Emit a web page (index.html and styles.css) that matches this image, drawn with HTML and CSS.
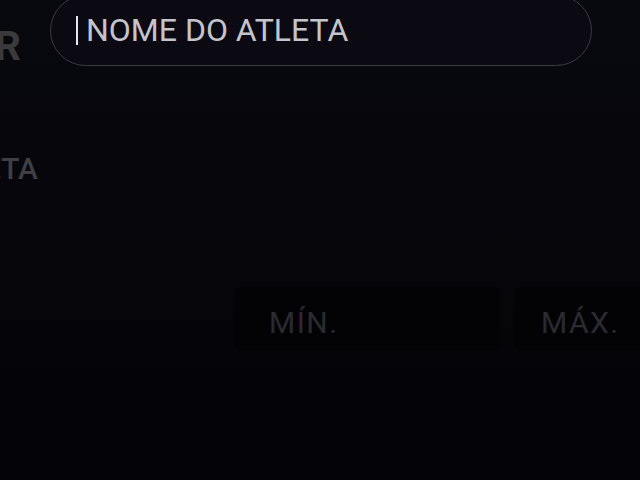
FILE: index.html
```html
<!DOCTYPE html>
<html lang="pt">
<head>
  <meta charset="UTF-8" />
  <meta name="viewport" content="width=device-width, initial-scale=1.0" />
  <title>Buscar atleta</title>
  <link rel="stylesheet" href="styles.css">
</head>
<body>
  <div class="screen">
    <div class="search-row">
      <div class="side-title"><span>FILTRAR</span></div>
      <div class="search-box">
        <span class="caret"></span>
        <span class="search-text">NOME DO ATLETA</span>
      </div>
    </div>

    <div class="field-label"><span>ATLETA</span></div>

    <div class="range-row">
      <div class="range-box">MÍN.</div>
      <div class="range-box">MÁX.</div>
    </div>
  </div>
</body>
</html>
```

FILE: styles.css
```css
html, body {
  margin: 0;
  padding: 0;
  height: 100%;
}
body {
  background: linear-gradient(180deg, #08080f 0%, #05050a 55%, #040307 100%);
  font-family: Roboto, 'Liberation Sans', sans-serif;
  overflow: hidden;
}
.screen {
  width: 640px;
  height: 480px;
  display: flex;
  flex-direction: column;
}
.search-row {
  display: flex;
  align-items: center;
  margin-top: -6px;
  height: 72px;
}
.side-title {
  width: 21px;
  height: 72px;
  display: flex;
  justify-content: flex-end;
  align-items: center;
  overflow: hidden;
  flex-shrink: 0;
}
.side-title span {
  font-size: 41px;
  font-weight: 700;
  color: #3a3a3c;
  white-space: nowrap;
  padding-top: 32px;
}
.search-box {
  margin-left: 29px;
  width: 542px;
  height: 71px;
  box-sizing: border-box;
  border: 1.5px solid #3a3a43;
  border-radius: 36px;
  background: #0b0a12;
  display: flex;
  align-items: center;
  padding-left: 25px;
}
.caret {
  width: 2px;
  height: 29px;
  background: #e6e6ee;
  margin-right: 8px;
}
.search-text {
  font-size: 32px;
  color: #c4c4cc;
  white-space: nowrap;
}
.field-label {
  margin-top: 86px;
  width: 38px;
  height: 32px;
  display: flex;
  justify-content: flex-end;
  align-items: center;
  overflow: hidden;
}
.field-label span {
  font-size: 30px;
  font-weight: 500;
  color: #3e3e44;
  white-space: nowrap;
}
.range-row {
  display: flex;
  gap: 15px;
  margin-top: 103px;
  margin-left: 235px;
}
.range-box {
  flex-shrink: 0;
  width: 265px;
  height: 64px;
  box-sizing: border-box;
  padding-left: 34px;
  padding-top: 6px;
  display: flex;
  align-items: center;
  background: #030306;
  border-radius: 6px;
  font-size: 30px;
  letter-spacing: 1.5px;
  color: #2a2a30;
}
.range-box + .range-box {
  width: 200px;
  padding-left: 26px;
}
```
